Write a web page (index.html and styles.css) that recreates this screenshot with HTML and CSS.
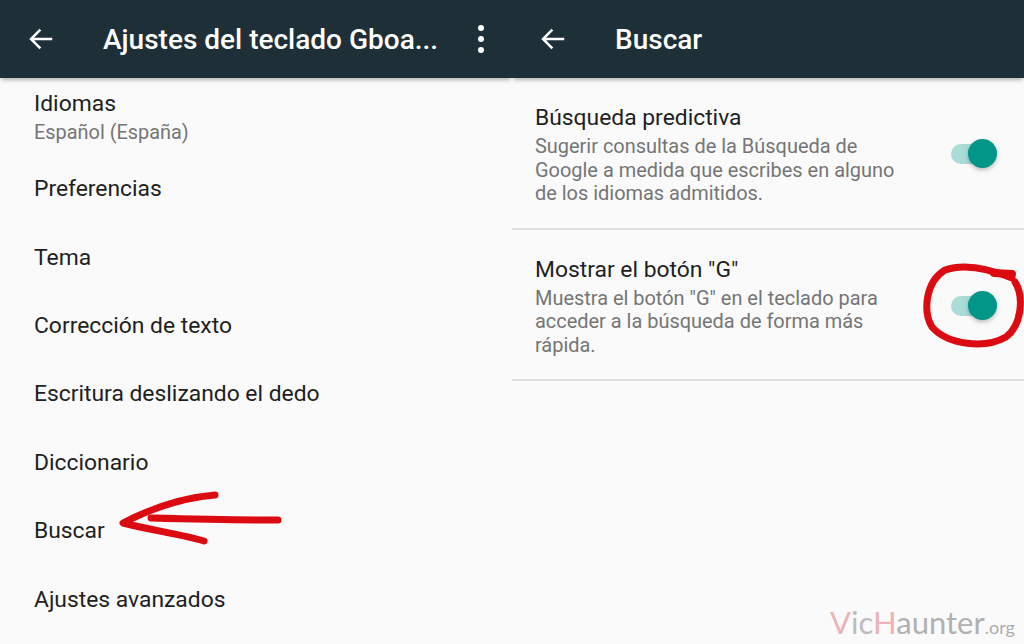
FILE: index.html
```html
<!DOCTYPE html>
<html lang="es">
<head>
    <meta charset="UTF-8">
    <meta name="viewport" content="width=device-width, initial-scale=1.0">
    <title>Ajustes del teclado Gboard</title>
    <link rel="stylesheet" href="styles.css">
</head>
<body>
    <div class="screens">
        <section class="screen">
            <header class="app-bar">
                <svg class="back-icon" viewBox="0 0 24 24"><path d="M21 12H4M11.5 4.5L4 12l7.5 7.5"/></svg>
                <h1 class="app-title">Ajustes del teclado Gboa...</h1>
                <div class="more-icon"><span></span><span></span><span></span></div>
            </header>
            <ul class="menu-list">
                <li class="menu-item menu-item-first">
                    <div class="menu-name">Idiomas</div>
                    <div class="menu-sub">Español (España)</div>
                </li>
                <li class="menu-item">Preferencias</li>
                <li class="menu-item">Tema</li>
                <li class="menu-item">Corrección de texto</li>
                <li class="menu-item">Escritura deslizando el dedo</li>
                <li class="menu-item">Diccionario</li>
                <li class="menu-item">Buscar</li>
                <li class="menu-item">Ajustes avanzados</li>
            </ul>
        </section>

        <section class="screen">
            <header class="app-bar">
                <svg class="back-icon" viewBox="0 0 24 24"><path d="M21 12H4M11.5 4.5L4 12l7.5 7.5"/></svg>
                <h1 class="app-title">Buscar</h1>
            </header>
            <div class="setting-row">
                <div class="setting-text">
                    <div class="setting-name">Búsqueda predictiva</div>
                    <div class="setting-desc">Sugerir consultas de la Búsqueda de<br>Google a medida que escribes en alguno<br>de los idiomas admitidos.</div>
                </div>
                <div class="switch"><div class="switch-thumb"></div></div>
            </div>
            <div class="setting-row">
                <div class="setting-text">
                    <div class="setting-name">Mostrar el botón "G"</div>
                    <div class="setting-desc">Muestra el botón "G" en el teclado para<br>acceder a la búsqueda de forma más<br>rápida.</div>
                </div>
                <div class="switch"><div class="switch-thumb"></div></div>
            </div>
        </section>
    </div>

    <!-- red marks drawn over the screenshot -->
    <svg class="marks" viewBox="0 0 1024 644">
        <path class="mark" d="M215 495C180 498 148 510 123 523C150 530 180 534 204 541"/>
        <path class="mark" d="M151 518C190 519 240 520 278 520"/>
        <path class="mark" d="M1012 278C990 269 965 263 945 270C925 282 923 312 932 327C948 345 985 349 1006 337C1022 325 1024 296 1015 282"/>
        <path class="mark mark-tail" d="M994 273L1012 274"/>
    </svg>

    <div class="watermark"><span class="wm-red">V</span><span class="wm-ic">ic</span><span class="wm-red">H</span>aunter<span class="wm-org">.org</span></div>
</body>
</html>
```

FILE: styles.css
```css
* {
    box-sizing: border-box;
    margin: 0;
    padding: 0;
}
html, body {
    height: 100%;
    overflow: hidden;
}
body {
    background: #fafafa;
    font-family: Roboto, 'Liberation Sans', sans-serif;
    color: #1f1f1f;
    position: relative;
}
.screens {
    display: flex;
    height: 644px;
}
.screen {
    width: 512px;
    flex: none;
    overflow: hidden;
}
.app-bar {
    height: 78px;
    background: #1e2f38;
    display: flex;
    align-items: center;
    padding-left: 26px;
    box-shadow: 0 3px 4px -1px rgba(0,0,0,0.28);
    position: relative;
}
.back-icon {
    width: 30px;
    height: 30px;
    fill: none;
    stroke: #fff;
    stroke-width: 2;
    margin-top: -1px;
}
.app-title {
    font-size: 28px;
    font-weight: 500;
    color: #fff;
    margin-left: 47px;
    margin-top: 1px;
    white-space: nowrap;
    width: 342px;
}
.more-icon {
    display: flex;
    flex-direction: column;
    gap: 5px;
    margin-left: 33px;
    margin-top: -1px;
}
.more-icon span {
    width: 6px;
    height: 6px;
    border-radius: 50%;
    background: #fff;
}
.menu-list {
    list-style: none;
    padding: 10px 0 0 34px;
}
.menu-item {
    height: 68.4px;
    font-size: 22.85px;
    display: flex;
    align-items: center;
}
.menu-item-first {
    display: block;
    height: 63.5px;
    padding-top: 1px;
    margin-bottom: 3px;
}
.menu-name {
    line-height: 29px;
}
.menu-sub {
    font-size: 19.9px;
    line-height: 28px;
    margin-top: 1px;
    color: #757575;
}
.setting-row {
    height: 151.5px;
    display: flex;
    padding: 25px 31px 0 23px;
    border-bottom: 2px solid #dfdfdf;
}
.setting-text {
    flex: 1;
}
.setting-name {
    font-size: 22.85px;
    line-height: 30px;
    margin-bottom: 2px;
}
.setting-desc {
    font-size: 19.95px;
    line-height: 23.6px;
    color: #757575;
}
.switch {
    width: 42px;
    height: 20px;
    margin-top: 41px;
    border-radius: 10px;
    background: #a9dcd6;
    position: relative;
}
.switch-thumb {
    width: 29px;
    height: 29px;
    border-radius: 50%;
    background: #009688;
    position: absolute;
    right: -4px;
    top: -5px;
    box-shadow: 0 2px 4px rgba(0,0,0,0.25);
}
.marks {
    position: absolute;
    left: 0;
    top: 0;
    width: 1024px;
    height: 644px;
    pointer-events: none;
}
.mark {
    fill: none;
    stroke: #dc0b12;
    stroke-width: 7;
    stroke-linecap: round;
    stroke-linejoin: round;
}
.mark-tail {
    stroke-width: 8;
}
.watermark {
    position: absolute;
    left: 830px;
    top: 603px;
    font-family: Lato, 'Open Sans', sans-serif;
    font-size: 31px;
    line-height: 38px;
    color: #b1b1b1;
    white-space: nowrap;
}
.wm-red {
    color: #ecb4b8;
}
.wm-ic {
    color: #bdbdbd;
}
.wm-org {
    font-size: 18px;
    color: #adadad;
}
```
